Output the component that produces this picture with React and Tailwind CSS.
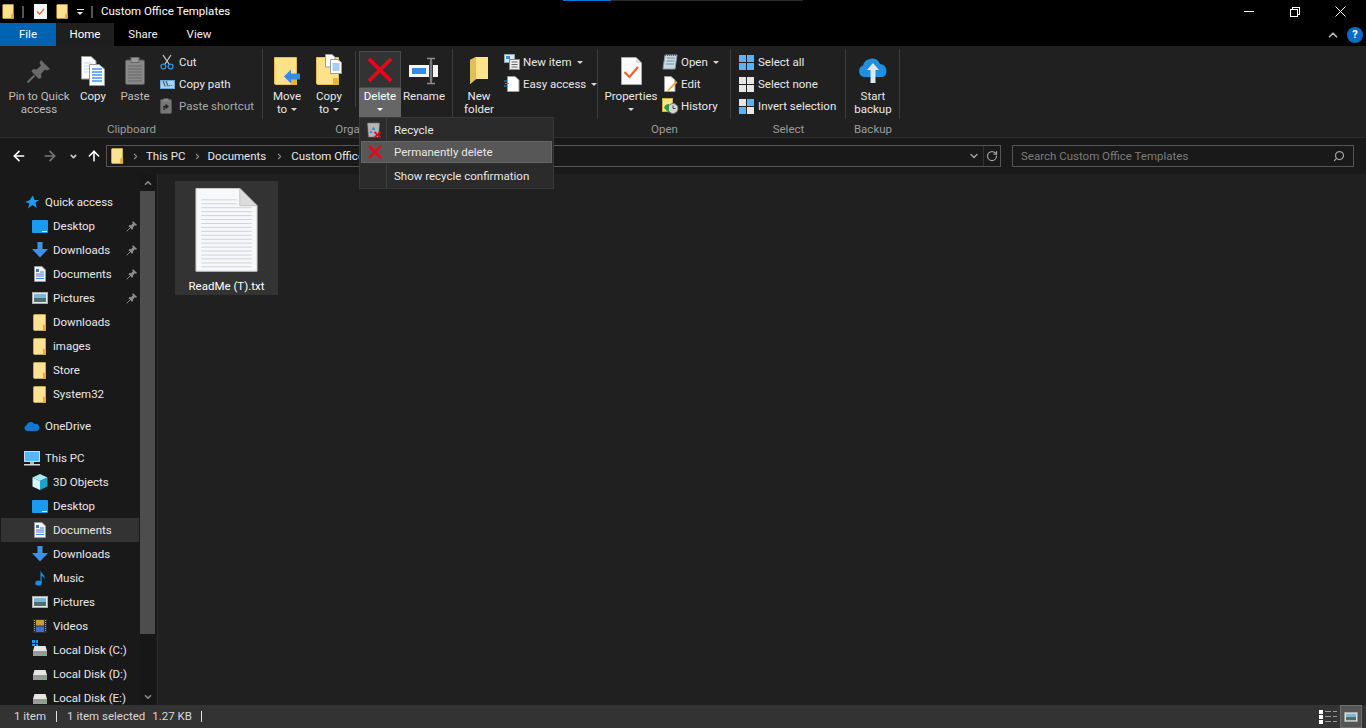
import { ChevronDown, ChevronUp, ArrowLeft, ArrowRight, ArrowUp, ChevronRight, RotateCw, Search } from 'lucide-react';

function FolderIcon({ className = 'w-[14px] h-[17px]' }) {
  return (
    <svg viewBox="0 0 14 17" className={className}>
      <path d="M0.5 1.5 Q0.5 0.5 1.5 0.5 H12.5 V16.5 H1.5 Q0.5 16.5 0.5 15.5 Z" fill="#fde38f" stroke="#e9c25a" strokeWidth="0.6" />
      <rect x="10" y="11" width="3" height="5.5" fill="#e2ad35" />
    </svg>
  );
}

function BigFolder() {
  return (
    <svg viewBox="0 0 23 28" className="w-[23px] h-[28px]">
      <path d="M0.5 0.5 H22.5 V27.5 H2 Q0.5 27.5 0.5 26 Z" fill="#fde28c" stroke="#e8bd55" strokeWidth="1" />
      <path d="M17 21 H23 V28 H17 Z" fill="#e6b33c" />
    </svg>
  );
}

function Caret({ color = '#d8d8d8' }) {
  return <span className="inline-block w-0 h-0 border-l-[3px] border-r-[3px] border-t-[3px] border-l-transparent border-r-transparent" style={{ borderTopColor: color }} />;
}

function PinIcon({ className = 'w-[26px] h-[26px]', color = '#6a6a6a' }) {
  return (
    <svg viewBox="0 0 26 26" className={className}>
      <path d="M15 2 L24 11 L21 12.5 L19 11.5 L15 16 L15.5 19.5 L13 21 L5.5 13.5 L7 11 L10.5 11.5 L15 7.5 L13.5 5 Z" fill={color} />
      <path d="M8.5 17.5 L1.5 24.5" stroke={color} strokeWidth="2" />
    </svg>
  );
}

function PageStack() {
  return (
    <svg viewBox="0 0 24 30" className="w-[24px] h-[30px]">
      <path d="M0.5 0.5 H10 L15 5 V23 H0.5 Z" fill="#fff" stroke="#999" />
      <path d="M3 7 H12 M3 10 H12 M3 13 H12 M3 16 H12" stroke="#bcd7ff" strokeWidth="1.2" />
      <path d="M8.5 8.5 H18 L23.5 13 V29.5 H8.5 Z" fill="#fff" stroke="#999" />
      {[13, 16, 19, 22, 25].map((y) => (
        <path key={y} d={`M11 ${y} H21`} stroke="#4f9bf5" strokeWidth="1.6" />
      ))}
    </svg>
  );
}

function ClipboardIcon() {
  return (
    <svg viewBox="0 0 20 28" className="w-[20px] h-[28px]">
      <rect x="0.5" y="3" width="19" height="24.5" rx="1.5" fill="#8a8a8a" stroke="#555" />
      <rect x="6" y="0.5" width="8" height="5" fill="#9a9a9a" stroke="#666" />
      <path d="M3 9 H17 M3 12 H17 M3 15 H17 M3 18 H17 M3 21 H17 M3 24 H17" stroke="#666" />
    </svg>
  );
}

function ScissorsIcon() {
  return (
    <svg viewBox="0 0 14 16" className="w-[14px] h-[16px]">
      <path d="M3 1 L9 10 M11 1 L5 10" stroke="#c8c8c8" strokeWidth="1.3" />
      <circle cx="3.4" cy="12.5" r="2.4" fill="none" stroke="#2f8ee0" strokeWidth="1.4" />
      <circle cx="10.6" cy="12.5" r="2.4" fill="none" stroke="#2f8ee0" strokeWidth="1.4" />
    </svg>
  );
}

function CopyPathIcon() {
  return (
    <div className="w-[15px] h-[9px] bg-[#a9d3f5] border border-[#6ea8d8] flex items-center justify-center text-[#1d3f66] text-[7px] leading-none font-bold">\\..</div>
  );
}

function PasteShortcutIcon() {
  return (
    <svg viewBox="0 0 12 16" className="w-[12px] h-[16px]">
      <rect x="0.5" y="1.5" width="11" height="14" rx="1" fill="#777" stroke="#555" />
      <rect x="3.5" y="0.5" width="5" height="3" fill="#888" />
      <path d="M4 12 V8.5 H7 M5.5 6.5 L8 8.5 L5.5 10.5" fill="none" stroke="#222" strokeWidth="1.3" />
    </svg>
  );
}

function RedX({ className = 'w-[28px] h-[28px]', stroke = 4 }) {
  return (
    <svg viewBox="0 0 28 28" className={className}>
      <path d="M2 2 L26 26 M26 2 L2 26" stroke="#e5081c" strokeWidth={stroke} />
    </svg>
  );
}

function RenameIcon() {
  return (
    <svg viewBox="0 0 30 28" className="w-[30px] h-[28px]">
      <rect x="0" y="8" width="29" height="12" fill="#f5f5f5" />
      <rect x="3" y="11" width="14" height="6" fill="#2f8de6" />
      <rect x="20" y="4" width="4" height="20" fill="#3a3a3a" />
      <path d="M18 1.5 H26 M18 26.5 H26 M22 1.5 V26.5" stroke="#8e8e8e" strokeWidth="1.6" />
    </svg>
  );
}

function MoveToIcon() {
  return (
    <div className="relative w-[26px] h-[28px]">
      <BigFolder />
      <svg viewBox="0 0 16 15" className="absolute left-[10px] top-[12px] w-[16px] h-[15px]">
        <path d="M0 7.5 L7 0.5 V4.5 H16 V10.5 H7 V14.5 Z" fill="#2f8de6" />
      </svg>
    </div>
  );
}

function CopyToIcon() {
  return (
    <div className="relative w-[26px] h-[28px]">
      <BigFolder />
      <svg viewBox="0 0 17 20" className="absolute left-[9px] top-[-3px] w-[17px] h-[20px]">
        <path d="M0.5 0.5 H7 L10 3 V13 H0.5 Z" fill="#fff" stroke="#999" />
        <path d="M5.5 5.5 H13 L16.5 8.5 V19.5 H5.5 Z" fill="#fff" stroke="#999" />
        <path d="M7.5 10 H14.5 M7.5 12 H14.5 M7.5 14 H14.5 M7.5 16 H14.5" stroke="#4f9bf5" />
      </svg>
    </div>
  );
}

function NewItemIcon() {
  return (
    <svg viewBox="0 0 16 16" className="w-[16px] h-[16px]">
      <rect x="0.5" y="0.5" width="10" height="8" fill="#dbe8f5" stroke="#8aa" />
      <rect x="2" y="2" width="4" height="3" fill="#3f8fe0" />
      <rect x="5.5" y="5.5" width="10" height="10" fill="#eee" stroke="#888" />
      <path d="M7.5 8 H13.5 M7.5 10.5 H13.5 M7.5 13 H13.5" stroke="#666" />
    </svg>
  );
}

function EasyAccessIcon() {
  return (
    <svg viewBox="0 0 16 16" className="w-[16px] h-[16px]">
      <path d="M3.5 0.5 H11 L15 4 V15.5 H3.5 Z" fill="#fff" stroke="#999" />
      <path d="M0 5 H4 M1 7.5 H5 M0 10 H4" stroke="#2f8de6" strokeWidth="1.2" />
    </svg>
  );
}

function PropertiesIcon() {
  return (
    <svg viewBox="0 0 21 28" className="w-[21px] h-[28px]">
      <path d="M0.5 0.5 H15 L20.5 6 V27.5 H0.5 Z" fill="#fafafa" stroke="#aaa" />
      <path d="M15 0.5 V6 H20.5 Z" fill="#ddd" />
      <path d="M3.5 15 L8.5 20 L17 10" fill="none" stroke="#e8622a" strokeWidth="2.2" />
    </svg>
  );
}

function OpenIcon() {
  return (
    <svg viewBox="0 0 16 16" className="w-[16px] h-[16px]">
      <path d="M3 1 H15 L13 15 H1 Z" fill="#c7dbe6" stroke="#8a9ba5" />
      <path d="M5 4 H13 M4.5 7 H12.5 M4 10 H12" stroke="#7d8f99" />
      <path d="M3 1 H15" stroke="#555" strokeWidth="1.5" strokeDasharray="1 1" />
    </svg>
  );
}

function EditIcon() {
  return (
    <svg viewBox="0 0 16 16" className="w-[16px] h-[16px]">
      <path d="M2.5 0.5 H9 L13 4 V15.5 H2.5 Z" fill="#fff" stroke="#999" />
      <path d="M14 5 L6 13.5 L5 15.5 L7 14.5 L15.5 6.5 Z" fill="#e9a72c" />
    </svg>
  );
}

function HistoryIcon() {
  return (
    <svg viewBox="0 0 17 16" className="w-[17px] h-[16px]">
      <rect x="0.5" y="0.5" width="10" height="13" fill="#fde28c" stroke="#d7ad45" />
      <circle cx="11" cy="10.5" r="5" fill="#d5d5d5" stroke="#777" />
      <path d="M11 7.5 V10.5 H13.5" stroke="#444" fill="none" />
      <path d="M2 10 A5 5 0 0 1 7 6 L7 15 Z" fill="#2f9e3c" />
    </svg>
  );
}

function SelectGrid({ colors }) {
  return (
    <div className="grid grid-cols-2 grid-rows-2 gap-[1px] w-[15px] h-[15px]">
      {colors.map((c, i) => (
        <span key={i} style={{ background: c }} />
      ))}
    </div>
  );
}

function CloudIcon() {
  return (
    <svg viewBox="0 0 32 28" className="w-[32px] h-[28px]">
      <path d="M7 20 A6 6 0 0 1 6 8.5 A9 9 0 0 1 23 7 A7 7 0 0 1 26 20 Z" fill="#1e8fe1" />
      <path d="M16 6 L22 13 H18.5 V26 H13.5 V13 H10 Z" fill="#dfe6ec" />
    </svg>
  );
}

function BigButton({ label, line2, caret, muted, className = '', children }) {
  const color = muted ? 'text-[#bdbdbd]' : 'text-[#e8e8e8]';
  return (
    <div className={`flex flex-col items-center shrink-0 h-[66px] ${className}`}>
      <div className="h-[39px] flex items-center justify-center">{children}</div>
      <div className={`text-[11.5px] leading-[13px] whitespace-nowrap ${color}`}>{label}</div>
      {line2 && (
        <div className={`text-[11.5px] leading-[13px] whitespace-nowrap flex items-center gap-[4px] ${color}`}>
          {line2}
          {caret && <Caret />}
        </div>
      )}
      {!line2 && caret && (
        <div className="h-[13px] flex items-center">
          <Caret />
        </div>
      )}
    </div>
  );
}

function SmallRow({ icon, label, caret, muted }) {
  return (
    <div className={`h-[22px] shrink-0 flex items-center text-[11.5px] whitespace-nowrap ${muted ? 'text-[#a8a8a8]' : 'text-[#e8e8e8]'}`}>
      <div className="w-[19px] flex items-center shrink-0">{icon}</div>
      <span className="pt-[1px]">{label}</span>
      {caret && (
        <span className="ml-[5px] flex items-center">
          <Caret />
        </span>
      )}
    </div>
  );
}

function SmallCol({ className = '', children }) {
  return <div className={`flex flex-col shrink-0 ${className}`}>{children}</div>;
}

function Group({ label, className = '', children }) {
  return (
    <div className={`flex flex-col shrink-0 relative ${className}`}>
      <div className="flex h-[71px] pt-[5px]">{children}</div>
      <div className="text-[11.5px] leading-[16px] text-center text-[#9d9d9d] mt-[4px]">{label}</div>
      <div className="absolute right-0 top-[3px] h-[70px] w-[1px] bg-[#3d3d3d]" />
    </div>
  );
}

function DesktopIcon() {
  return (
    <svg viewBox="0 0 16 13" className="w-[16px] h-[13px]">
      <rect width="16" height="13" rx="1" fill="#1b9bf0" />
      <path d="M10 11.5 H15" stroke="#d8f0ff" />
    </svg>
  );
}

function DownloadIcon() {
  return (
    <svg viewBox="0 0 16 16" className="w-[16px] h-[16px]">
      <path d="M5.5 0 H10.5 V7 H16 L8 15.5 L0 7 H5.5 Z" fill="#3d94e6" />
    </svg>
  );
}

function DocumentsIcon() {
  return (
    <svg viewBox="0 0 12 16" className="w-[12px] h-[16px]">
      <path d="M0.5 0.5 H8 L11.5 4 V15.5 H0.5 Z" fill="#f3f3f3" stroke="#999" />
      <rect x="2" y="3" width="3" height="3" fill="#2d7cc9" />
      <path d="M6 6 H10 M2 8 H10 M2 10 H10 M2 12.5 H10" stroke="#2d7cc9" strokeWidth="0.9" />
    </svg>
  );
}

function PicturesIcon({ className = 'w-[16px] h-[12px]' }) {
  return (
    <svg viewBox="0 0 16 12" className={className}>
      <rect x="0.5" y="0.5" width="15" height="11" fill="#e8e8e8" stroke="#aaa" />
      <rect x="2" y="2" width="12" height="4" fill="#79b7dc" />
      <rect x="2" y="6" width="12" height="4" fill="#4d7068" />
    </svg>
  );
}

function StarIcon() {
  return (
    <svg viewBox="0 0 14 14" className="w-[14px] h-[14px]">
      <path d="M8 0.5 L9.5 5 H14 L10.5 7.8 L11.8 13 L7.5 10 L3 13.5 L4.5 8.2 L0 7 L5 5 L6 3 Z" fill="#1e9bf0" />
    </svg>
  );
}

function CloudSmall() {
  return (
    <svg viewBox="0 0 16 10" className="w-[16px] h-[10px]">
      <path d="M3 10 A3 3 0 0 1 2.5 4.2 A4.5 4.5 0 0 1 10.5 3 A3.5 3.5 0 0 1 13 10 Z" fill="#0f78d4" />
    </svg>
  );
}

function PcIcon() {
  return (
    <svg viewBox="0 0 16 15" className="w-[16px] h-[15px]">
      <rect x="0.5" y="0.5" width="15" height="10" fill="#58b6f2" stroke="#cfd8de" />
      <rect x="6" y="11" width="4" height="2" fill="#aeb7bd" />
      <rect x="0" y="13" width="16" height="1.5" fill="#cfd8de" />
    </svg>
  );
}

function CubeIcon() {
  return (
    <svg viewBox="0 0 16 16" className="w-[16px] h-[16px]">
      <path d="M8 0 L15.5 3.5 L8 7 L0.5 3.5 Z" fill="#a6ecf5" />
      <path d="M0.5 3.5 L8 7 V16 L0.5 12.5 Z" fill="#d5f5fa" />
      <path d="M15.5 3.5 L8 7 V16 L15.5 12.5 Z" fill="#18a5c9" />
    </svg>
  );
}

function MusicIcon() {
  return (
    <svg viewBox="0 0 11 16" className="w-[11px] h-[16px]">
      <ellipse cx="3.5" cy="13" rx="3.2" ry="2.6" fill="#1b90e8" />
      <path d="M5.5 13 V0.5 C6.5 4 10.5 5 9.5 9.5 C9 6.5 7.5 6 6.7 6 V13 Z" fill="#1b90e8" />
    </svg>
  );
}

function VideosIcon() {
  return (
    <svg viewBox="0 0 14 14" className="w-[14px] h-[14px]">
      <rect width="14" height="14" fill="#2d2d35" />
      <rect x="3" y="1" width="8" height="5.5" fill="#c99c3c" />
      <rect x="3" y="7.5" width="8" height="5.5" fill="#3f6fd0" />
      <path d="M1.5 1 V13 M12.5 1 V13" stroke="#999" strokeWidth="1" strokeDasharray="1 1" />
    </svg>
  );
}

function DiskIcon({ win }) {
  return (
    <div className="relative w-[16px] h-[14px]">
      {win && (
        <div className="absolute left-0 top-[-3px] grid grid-cols-2 gap-[1px] w-[6px] h-[6px]">
          <span className="bg-[#1b9bf0]" />
          <span className="bg-[#1b9bf0]" />
          <span className="bg-[#1b9bf0]" />
          <span className="bg-[#1b9bf0]" />
        </div>
      )}
      <svg viewBox="0 0 16 14" className="w-[16px] h-[14px]">
        <path d="M2.5 3 H13.5 L15 8 H1 Z" fill="#e6e6e6" />
        <rect x="1" y="8" width="14" height="5" fill="#9a9a9a" />
        <rect x="11" y="10" width="2" height="1.5" fill="#35d04a" />
      </svg>
    </div>
  );
}

function NavRow({ icon, label, pinned, top, selected }) {
  return (
    <div className={`h-[24px] flex items-center text-[11.5px] whitespace-nowrap text-[#e8e8e8] mx-[1px] ${selected ? 'bg-[#333333]' : ''} ${top ? 'pl-[23px]' : 'pl-[31px]'}`}>
      <div className="w-[21px] shrink-0 flex items-center justify-center pr-[5px]">{icon}</div>
      <span className="flex-1 pt-[1px]">{label}</span>
      {pinned && (
        <span className="pr-[1px]">
          <PinIcon className="w-[12px] h-[12px]" color="#8d8d8d" />
        </span>
      )}
    </div>
  );
}

function Sidebar() {
  return (
    <div className="w-[140px] shrink-0 overflow-hidden pt-[16px]">
      <NavRow top icon={<StarIcon />} label="Quick access" />
      <NavRow icon={<DesktopIcon />} label="Desktop" pinned />
      <NavRow icon={<DownloadIcon />} label="Downloads" pinned />
      <NavRow icon={<DocumentsIcon />} label="Documents" pinned />
      <NavRow icon={<PicturesIcon />} label="Pictures" pinned />
      <NavRow icon={<FolderIcon />} label="Downloads" />
      <NavRow icon={<FolderIcon />} label="images" />
      <NavRow icon={<FolderIcon />} label="Store" />
      <NavRow icon={<FolderIcon />} label="System32" />
      <div className="h-[8px]" />
      <NavRow top icon={<CloudSmall />} label="OneDrive" />
      <div className="h-[8px]" />
      <NavRow top icon={<PcIcon />} label="This PC" />
      <NavRow icon={<CubeIcon />} label="3D Objects" />
      <NavRow icon={<DesktopIcon />} label="Desktop" />
      <NavRow icon={<DocumentsIcon />} label="Documents" selected />
      <NavRow icon={<DownloadIcon />} label="Downloads" />
      <NavRow icon={<MusicIcon />} label="Music" />
      <NavRow icon={<PicturesIcon />} label="Pictures" />
      <NavRow icon={<VideosIcon />} label="Videos" />
      <NavRow icon={<DiskIcon win />} label="Local Disk (C:)" />
      <NavRow icon={<DiskIcon />} label="Local Disk (D:)" />
      <NavRow icon={<DiskIcon />} label="Local Disk (E:)" />
    </div>
  );
}

function TextFileIcon() {
  const rows = [];
  for (let y = 12; y < 82; y += 4) rows.push(y);
  return (
    <svg viewBox="0 0 63 85" className="w-[63px] h-[85px]">
      <path d="M0.5 0.5 H45 L62.5 18 V84.5 H0.5 Z" fill="#f7f8fa" stroke="#c9c9c9" />
      {rows.map((y) => (
        <path key={y} d={`M6 ${y} H${y < 18 ? 42 : 57}`} stroke="#cfd2d6" />
      ))}
      <path d="M45 0.5 V18 H62.5 Z" fill="#dcdcdc" stroke="#c4c4c4" />
    </svg>
  );
}

function DetailsRow() {
  return (
    <div className="flex items-center gap-[2px]">
      <span className="w-[4px] h-[4px] bg-white" />
      <span className="w-[6px] h-[1px] bg-[#999999]" />
      <span className="w-[4px] h-[1px] bg-[#999999]" />
    </div>
  );
}

function DeleteMenu() {
  return (
    <div className="absolute left-[359px] top-[117px] w-[195px] h-[72px] bg-[#2b2b2b] border border-[#383838] flex flex-col text-[11.5px] text-[#e8e8e8] z-10 p-[1px]">
      <div className="absolute left-[26px] top-0 bottom-0 w-[1px] bg-[#3f3f3f]" />
      <div className="h-[22px] shrink-0 flex items-center">
        <div className="w-[26px] flex justify-center">
          <svg viewBox="0 0 14 16" className="w-[14px] h-[16px]">
            <path d="M0.5 1 H12.5 L11.5 15 H1.5 Z" fill="#b5b5b5" stroke="#777" strokeWidth="0.6" />
            <path d="M4.5 8 L6.5 4.5 L8.5 8 Z M2.5 11 L4 8.5 L5.5 11 Z" fill="#2f8de6" />
            <path d="M7.5 10 L13.5 15.5 M13.5 10 L7.5 15.5" stroke="#e5081c" strokeWidth="1.7" />
          </svg>
        </div>
        <span className="pl-[7px] pt-[1px]">Recycle</span>
      </div>
      <div className="h-[22px] shrink-0 flex items-center bg-[#575757] border border-[#666666] relative">
        <div className="w-[26px] flex justify-center">
          <RedX className="w-[14px] h-[14px]" stroke={5} />
        </div>
        <span className="pl-[6px] pt-[1px]">Permanently delete</span>
      </div>
      <div className="h-[26px] shrink-0 flex items-center">
        <div className="w-[26px]" />
        <span className="pl-[7px] pt-[1px]">Show recycle confirmation</span>
      </div>
    </div>
  );
}

export default function App() {
  return (
    <div className="w-[1366px] h-[728px] relative overflow-hidden flex flex-col bg-black font-['Roboto','Noto_Sans',sans-serif] text-[#e8e8e8]">
      <div className="absolute left-[563px] top-0 w-[240px] h-[1px] bg-[#2a2a2a]">
        <div className="w-[48px] h-[1px] bg-[#0078d7]" />
      </div>

      {/* title bar */}
      <div className="h-[23px] flex items-center shrink-0">
        <div className="pl-[2px] flex items-center">
          <FolderIcon className="w-[13px] h-[15px]" />
        </div>
        <div className="ml-[7px] w-[2px] h-[12px] bg-[#555555]" />
        <div className="ml-[10px] w-[13px] h-[15px] bg-[#f5f5f5] flex items-center justify-center">
          <svg viewBox="0 0 10 8" className="w-[9px] h-[7px]">
            <path d="M1 4 L4 7 L9 1" fill="none" stroke="#e8622a" strokeWidth="1.5" />
          </svg>
        </div>
        <div className="ml-[9px]">
          <FolderIcon className="w-[13px] h-[15px]" />
        </div>
        <div className="ml-[7px] flex flex-col items-center gap-[2px] w-[8px]">
          <div className="w-[7px] h-[1px] bg-[#e8e8e8]" />
          <Caret color="#e8e8e8" />
        </div>
        <div className="ml-[7px] w-[2px] h-[12px] bg-[#555555]" />
        <div className="ml-[8px] pt-[1px] text-[11.5px] text-white">Custom Office Templates</div>
        <div className="ml-auto flex items-center text-white">
          <div className="w-[10px] h-[1px] bg-white mr-[36px]" />
          <div className="relative w-[10px] h-[10px] mr-[35px]">
            <div className="absolute right-0 top-0 w-[8px] h-[8px] border border-white" />
            <div className="absolute left-0 bottom-0 w-[8px] h-[8px] border border-white bg-black" />
          </div>
          <svg viewBox="0 0 11 11" className="w-[11px] h-[11px] mr-[20px]">
            <path d="M0.5 0.5 L10.5 10.5 M10.5 0.5 L0.5 10.5" stroke="#fff" />
          </svg>
        </div>
      </div>

      {/* tabs */}
      <div className="h-[23px] flex shrink-0 text-[11.5px] text-[#f0f0f0] relative">
        <div className="w-[56px] pt-[1px] bg-[#0063b1] flex items-center justify-center text-white">File</div>
        <div className="w-[58px] pt-[1px] bg-[#1f1f1f] flex items-center justify-center text-white">Home</div>
        <div className="w-[58px] pt-[1px] flex items-center justify-center">Share</div>
        <div className="w-[54px] pt-[1px] flex items-center justify-center">View</div>
        <div className="ml-auto flex items-center pr-[3px]">
          <ChevronUp className="w-[14px] h-[14px] text-[#bdbdbd] mr-[7px]" strokeWidth={3} />
          <div className="w-[16px] h-[16px] rounded-full bg-[#0a6cc9] flex items-center justify-center text-white text-[11px] leading-none font-bold">?</div>
        </div>
      </div>

      {/* ribbon */}
      <div className="h-[92px] bg-[#202020] border-b border-[#2e2e2e] flex shrink-0">
        <Group label="Clipboard" className="w-[263px]">
          <BigButton label="Pin to Quick" line2="access" muted className="w-[78px]">
            <PinIcon />
          </BigButton>
          <BigButton label="Copy" className="w-[30px]">
            <PageStack />
          </BigButton>
          <BigButton label="Paste" muted className="w-[38px] ml-[8px]">
            <ClipboardIcon />
          </BigButton>
          <SmallCol className="ml-[6px]">
            <SmallRow icon={<ScissorsIcon />} label="Cut" />
            <SmallRow icon={<CopyPathIcon />} label="Copy path" />
            <SmallRow icon={<PasteShortcutIcon />} label="Paste shortcut" muted />
          </SmallCol>
        </Group>
        <Group label="Organize" className="w-[190px]">
          <BigButton label="Move" line2="to" caret className="w-[42px] ml-[3px]">
            <MoveToIcon />
          </BigButton>
          <BigButton label="Copy" line2="to" caret className="w-[42px]">
            <CopyToIcon />
          </BigButton>
          <div className="w-[1px] h-[56px] bg-[#3d3d3d] ml-[5px] mr-[3px]" />
          <div className="w-[42px] h-[66px] flex flex-col shrink-0">
            <div className="h-[37px] bg-[#333333] border border-[#4a4a4a] flex items-center justify-center">
              <RedX className="w-[26px] h-[26px]" />
            </div>
            <div className="flex-1 bg-[#666666] flex flex-col items-center text-[11.5px] leading-[16px] text-white">
              Delete
              <span className="flex h-[10px] items-center">
                <Caret color="#ffffff" />
              </span>
            </div>
          </div>
          <BigButton label="Rename" className="w-[46px]">
            <RenameIcon />
          </BigButton>
        </Group>
        <Group label="New" className="w-[145px]">
          <BigButton label="New" line2="folder" className="w-[46px] ml-[3px]">
            <svg viewBox="0 0 18 28" className="w-[18px] h-[28px]">
              <path d="M0 3 L6 0 H18 V22 L6 22 L0 27 Z" fill="#fde28c" />
              <path d="M0 3 L6 0 V22 L0 27 Z" fill="#e5bc5a" />
            </svg>
          </BigButton>
          <SmallCol className="ml-[2px]">
            <SmallRow icon={<NewItemIcon />} label="New item" caret />
            <SmallRow icon={<EasyAccessIcon />} label="Easy access" caret />
          </SmallCol>
        </Group>
        <Group label="Open" className="w-[133px]">
          <BigButton label="Properties" caret className="w-[54px] ml-[6px]">
            <PropertiesIcon />
          </BigButton>
          <SmallCol className="ml-[4px]">
            <SmallRow icon={<OpenIcon />} label="Open" caret />
            <SmallRow icon={<EditIcon />} label="Edit" />
            <SmallRow icon={<HistoryIcon />} label="History" />
          </SmallCol>
        </Group>
        <Group label="Select" className="w-[115px]">
          <SmallCol className="ml-[8px]">
            <SmallRow icon={<SelectGrid colors={['#5db2f5', '#5db2f5', '#5db2f5', '#5db2f5']} />} label="Select all" />
            <SmallRow icon={<SelectGrid colors={['#e6e6e6', '#e6e6e6', '#e6e6e6', '#e6e6e6']} />} label="Select none" />
            <SmallRow icon={<SelectGrid colors={['#e6e6e6', '#5db2f5', '#5db2f5', '#e6e6e6']} />} label="Invert selection" />
          </SmallCol>
        </Group>
        <Group label="Backup" className="w-[54px]">
          <BigButton label="Start" line2="backup" className="w-[54px]">
            <CloudIcon />
          </BigButton>
        </Group>
      </div>

      {/* address bar */}
      <div className="h-[36px] bg-[#191919] flex items-center shrink-0 text-[#e8e8e8]">
        <ArrowLeft className="w-[16px] h-[16px] ml-[11px] text-white" strokeWidth={2.4} />
        <ArrowRight className="w-[16px] h-[16px] ml-[15px] text-[#7a7a7a]" strokeWidth={2.4} />
        <ChevronDown className="w-[9px] h-[9px] ml-[11px] text-[#d0d0d0]" strokeWidth={4} />
        <ArrowUp className="w-[16px] h-[16px] ml-[8px] text-white" strokeWidth={2.4} />
        <div className="ml-[4px] w-[895px] h-[22px] border border-[#555555] flex items-center text-[11.5px]">
          <div className="ml-[4px]">
            <FolderIcon className="w-[13px] h-[16px]" />
          </div>
          <ChevronRight className="w-[9px] h-[9px] ml-[7px] mr-[6px] text-[#8a8a8a]" strokeWidth={3} />
          <span className="pt-[1px]">This PC</span>
          <ChevronRight className="w-[9px] h-[9px] ml-[7px] mr-[6px] text-[#8a8a8a]" strokeWidth={3} />
          <span className="pt-[1px]">Documents</span>
          <ChevronRight className="w-[9px] h-[9px] ml-[9px] mr-[7px] text-[#8a8a8a]" strokeWidth={3} />
          <span className="pt-[1px]">Custom Office Templates</span>
          <div className="ml-auto flex items-center h-full">
            <ChevronDown className="w-[12px] h-[12px] text-[#a0a0a0] mr-[3px]" strokeWidth={3} />
            <div className="w-[1px] h-full bg-[#333333]" />
            <RotateCw className="w-[12px] h-[12px] mx-[2px] text-[#a0a0a0]" strokeWidth={2.5} />
          </div>
        </div>
        <div className="ml-[11px] w-[342px] h-[22px] border border-[#555555] flex items-center text-[11.5px] text-[#7c7c7c] pl-[8px] pr-[8px]">
          <span className="flex-1 pt-[1px]">Search Custom Office Templates</span>
          <Search className="w-[12px] h-[12px] text-[#a0a0a0] -scale-x-100" strokeWidth={2.5} />
        </div>
      </div>

      {/* body */}
      <div className="flex-1 flex min-h-0 bg-[#191919]">
        <Sidebar />
        <div className="w-[15px] shrink-0 flex flex-col items-center bg-[#171717]">
          <div className="h-[17px] flex items-center">
            <ChevronUp className="w-[10px] h-[10px] text-[#8a8a8a]" strokeWidth={4} />
          </div>
          <div className="w-full h-[443px] bg-[#4d4d4d]" />
          <div className="mt-auto h-[17px] flex items-center">
            <ChevronDown className="w-[10px] h-[10px] text-[#8a8a8a]" strokeWidth={4} />
          </div>
        </div>
        <div className="w-[3px] shrink-0 bg-[#191919] border-r border-[#2a2a2a]" />
        <div className="flex-1 bg-[#202020] pl-[17px] pt-[7px]">
          <div className="w-[103px] h-[114px] bg-[#333333] flex flex-col items-center pt-[7px]">
            <TextFileIcon />
            <div className="text-[11.5px] text-white mt-[6px] whitespace-nowrap">ReadMe (T).txt</div>
          </div>
        </div>
      </div>

      {/* status bar */}
      <div className="h-[23px] bg-[#333333] flex items-center shrink-0 text-[11.5px] text-[#d8d8d8]">
        <span className="ml-[14px] pt-[1px]">1 item</span>
        <div className="ml-[10px] w-[1px] h-[11px] bg-[#e0e0e0]" />
        <span className="ml-[10px] pt-[1px]">1 item selected</span>
        <span className="ml-[7px] pt-[1px]">1.27 KB</span>
        <div className="ml-[9px] w-[1px] h-[11px] bg-[#e0e0e0]" />
        <div className="ml-auto flex items-center mr-[4px]">
          <div className="flex flex-col gap-[1px] mr-[3px]">
            <DetailsRow />
            <DetailsRow />
            <DetailsRow />
          </div>
          <div className="w-[22px] h-[23px] bg-[#555555] border border-[#6e6e6e] flex items-center justify-center">
            <PicturesIcon className="w-[14px] h-[10px]" />
          </div>
        </div>
      </div>

      <DeleteMenu />
    </div>
  );
}
